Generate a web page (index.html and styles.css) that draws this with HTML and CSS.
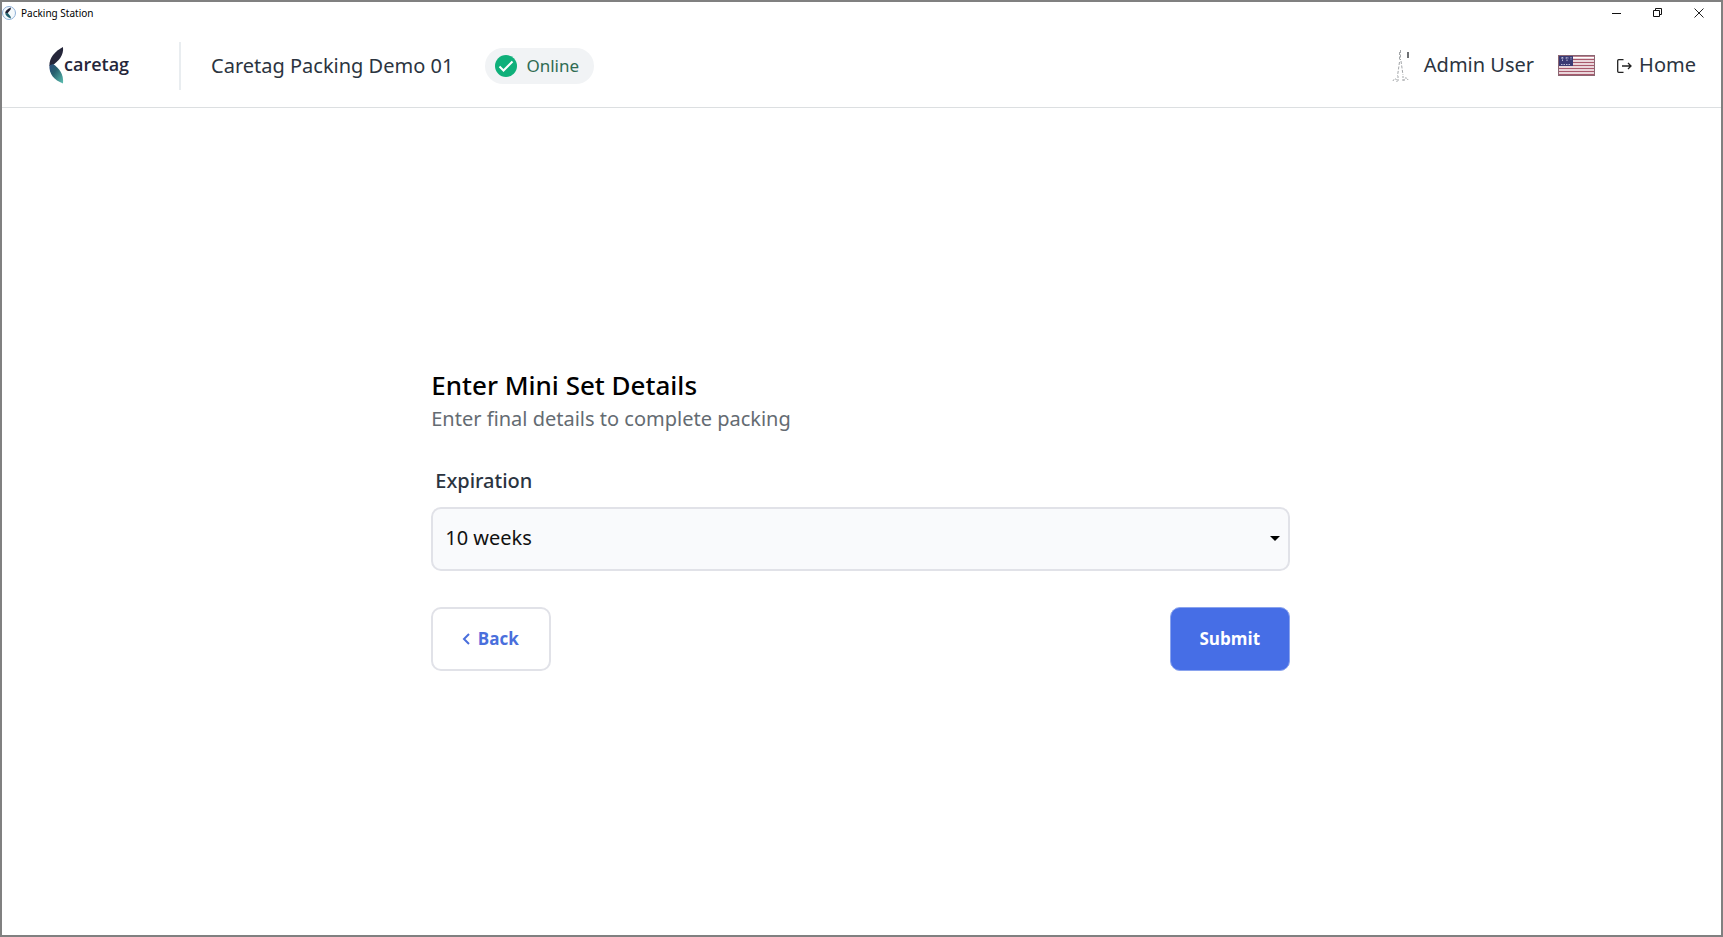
FILE: index.html
```html
<!DOCTYPE html>
<html lang="en">
<head>
    <meta charset="UTF-8">
    <title>Packing Station</title>
    <meta name="viewport" content="width=device-width, initial-scale=1.0">
    <link rel="stylesheet" href="styles.css">
</head>
<body>
    <div class="titlebar">
        <svg class="app-icon" width="14" height="14" viewBox="0 0 14 14" aria-hidden="true">
            <circle cx="7" cy="7" r="6.5" fill="#f4f9fc" stroke="#8fb0d8"/>
            <path d="M9 1.500C5 3 3 5.200 3.200 7.200L5.800 7C6.500 5.600 9 4.400 9 1.500z" fill="#1f2033"/>
            <path d="M9 12.500C5.600 11 3.400 9.400 3.200 7.200L5.800 7C6.500 8.400 9 9.600 9 12.500z" fill="#1f5f6c"/>
        </svg>
        <span class="app-name">Packing Station</span>
        <div class="win-btns">
            <button type="button" aria-label="Minimize">
                <svg width="10" height="10" viewBox="0 0 10 10"><path d="M0 5.5h9" stroke="#111"/></svg>
            </button>
            <button type="button" aria-label="Restore">
                <svg width="10" height="10" viewBox="0 0 10 10" fill="none" stroke="#111"><path d="M.5 2.5h6v6h-6zM2.5 2V.5h6v6H7"/></svg>
            </button>
            <button type="button" aria-label="Close">
                <svg width="10" height="10" viewBox="0 0 10 10"><path d="M.5.5l9 9M9.5.5l-9 9" stroke="#222"/></svg>
            </button>
        </div>
    </div>

    <header class="header">
        <div class="logo">
            <svg width="15" height="37" viewBox="0 0 15 37" aria-hidden="true">
                <defs>
                    <linearGradient id="leaf" x1="0" y1="0" x2="1" y2="1">
                        <stop offset="0" stop-color="#2b4a7c"/>
                        <stop offset=".4" stop-color="#28606e"/>
                        <stop offset="1" stop-color="#5cc0b2"/>
                    </linearGradient>
                </defs>
                <path d="M14 0C6 4 0 11 .4 19L4 18C9 14 15 9 14 0z" fill="#25263a"/>
                <path d="M14 36.500C5 33 0 27 .4 18.500L4 17C10 21 15 27 14 36.500z" fill="url(#leaf)"/>
            </svg>
            <span>caretag</span>
        </div>
        <div class="station">Caretag Packing Demo 01</div>
        <div class="status">
            <svg width="22" height="22" viewBox="0 0 22 22" aria-hidden="true">
                <circle cx="11" cy="11" r="11" fill="#0fb07a"/>
                <path d="M4.500 11.500l4 4 9-9" fill="none" stroke="#fff" stroke-width="2"/>
            </svg>
            <span>Online</span>
        </div>
        <div class="user">
            <svg width="20" height="36" viewBox="0 0 20 36" fill="none" stroke="#a3a6a9" aria-hidden="true">
                <path d="M8.500 2v10M7.500 4v9M9 13l2 14M7.500 14L5.500 28" stroke-dasharray="3 1.500"/>
                <path d="M1 33c1-3 4-3 4 1M12 33c0-4 3-4 4-1M6 28v5M11 28v5" stroke-dasharray="2 1"/>
                <path d="M16 4v6" stroke="#6d7073" stroke-width="2"/>
            </svg>
            <span>Admin User</span>
        </div>
        <button type="button" class="lang" aria-label="Language">
            <svg width="37" height="21" viewBox="0 0 37 21">
                <rect width="37" height="21" fill="#fff"/>
                <path d="M0 1h37M0 4.500h37M0 7.500h37M0 10.500h37M0 13.500h37M0 16.500h37M0 19.500h37" stroke="#a8596c" stroke-width="1.500"/>
                <rect width="15" height="11" fill="#3a3a74"/>
                <path d="M4.500 2v5M9 2v5M13 2v3M3 3h3M7.500 3h3M3 9.500h10" stroke="#b9b9d6" stroke-dasharray="1.500 1"/>
                <rect x=".5" y=".5" width="36" height="20" fill="none" stroke="#8b6672"/>
            </svg>
        </button>
        <a class="home" href="#">
            <svg width="15" height="14" viewBox="0 0 15 14" fill="none" stroke="#222" stroke-width="1.300" aria-hidden="true">
                <path d="M6.500.7H1.700Q.7.700.7 1.700v10.600q0 1 1 1H6.500M5 7h9M11 4l3 3-3 3"/>
            </svg>
            <span>Home</span>
        </a>
    </header>

    <main class="main">
        <form class="details" onsubmit="return false">
            <h1>Enter Mini Set Details</h1>
            <p>Enter final details to complete packing</p>
            <label for="expiration">Expiration</label>
            <div class="select">
                <select id="expiration">
                    <option>10 weeks</option>
                </select>
                <svg width="10" height="5" viewBox="0 0 10 5" aria-hidden="true"><path d="M0 0h10L5 5z" fill="#000"/></svg>
            </div>
            <div class="actions">
                <button type="button" class="btn btn-back">
                    <svg width="8" height="12" viewBox="0 0 8 12" fill="none" stroke="#4a6fdc" stroke-width="2" aria-hidden="true"><path d="M7 1L2 6l5 5"/></svg>
                    Back
                </button>
                <button type="submit" class="btn btn-submit">Submit</button>
            </div>
        </form>
    </main>
</body>
</html>
```

FILE: styles.css
```css
*{
    box-sizing: border-box;
    margin: 0;
    padding: 0;
}
body{
    min-height: 100vh;
    display: flex;
    flex-direction: column;
    border: 2px solid #808080;
    background: #fff;
    color: #2b3440;
    font-family: "Noto Sans", "Open Sans", sans-serif;
    font-size: 20px;
    line-height: 28px;
}
button, select{
    font-family: inherit;
}
button{
    border: 0;
    background: none;
    cursor: pointer;
}
svg{
    display: block;
    flex: none;
}

/* title bar */
.titlebar{
    display: flex;
    align-items: center;
    height: 22px;
}
.app-name{
    margin-left: 5px;
    color: #000;
    font-size: 10px;
    line-height: 20px;
}
.win-btns{
    display: flex;
    margin-left: auto;
    padding-right: 2px;
}
.win-btns button{
    display: flex;
    align-items: center;
    justify-content: center;
    width: 41px;
    height: 20px;
}

/* header */
.header{
    display: flex;
    align-items: center;
    height: 84px;
    padding: 0 25px 0 47px;
    border-bottom: 1px solid #dcdfe1;
}
.logo{
    display: flex;
    align-items: center;
    height: 48px;
    padding-right: 50px;
    border-right: 2px solid #e9edf0;
    color: #25263a;
    font-family: "Open Sans", sans-serif;
    font-size: 18px;
    font-weight: 600;
}
.logo span{
    padding-bottom: 4px;
}
.station{
    margin-left: 30px;
}
.status{
    display: flex;
    align-items: center;
    gap: 9px;
    height: 36px;
    margin-left: 32px;
    padding: 0 15px 0 10px;
    border-radius: 18px;
    background: #f1f3f5;
    color: #2f6b52;
    font-size: 17px;
}
.user{
    display: flex;
    align-items: center;
    gap: 12px;
    margin-left: auto;
}
.lang{
    margin: 0 22px 0 24px;
}
.home{
    display: flex;
    align-items: center;
    gap: 7px;
    color: inherit;
    text-decoration: none;
}
.user span, .home span{
    padding-bottom: 2px;
}

/* form */
.main{
    flex: 1;
    display: flex;
    align-items: center;
    justify-content: center;
    padding: 0 2px 4px 0;
}
.details{
    width: 50%;
}
.details h1{
    color: #000;
    font-size: 26px;
    font-weight: 500;
    line-height: 32px;
}
.details p{
    color: #646b72;
    line-height: 36px;
}
.details label{
    display: block;
    padding: 30px 4px 12px;
    font-weight: 500;
}
.select{
    position: relative;
}
.select select{
    display: block;
    width: 100%;
    height: 64px;
    padding: 0 32px 2px 12px;
    border: 2px solid #e1e2e8;
    border-radius: 10px;
    background: #f9fafc;
    color: #111;
    font-size: 20px;
    appearance: none;
}
.select svg{
    position: absolute;
    right: 10px;
    top: 29px;
    pointer-events: none;
}
.actions{
    display: flex;
    justify-content: space-between;
    margin-top: 36px;
}
.btn{
    display: flex;
    align-items: center;
    justify-content: center;
    gap: 8px;
    width: 120px;
    height: 64px;
    border: 2px solid #e1e2e8;
    border-radius: 10px;
    font-family: "Open Sans", sans-serif;
    font-size: 17px;
    font-weight: 700;
}
.btn-back{
    padding-right: 2px;
    color: #4a6fdc;
}
.btn-submit{
    border: 1px solid #8aa3ee;
    background: #466ee6;
    color: #fff;
}
```
